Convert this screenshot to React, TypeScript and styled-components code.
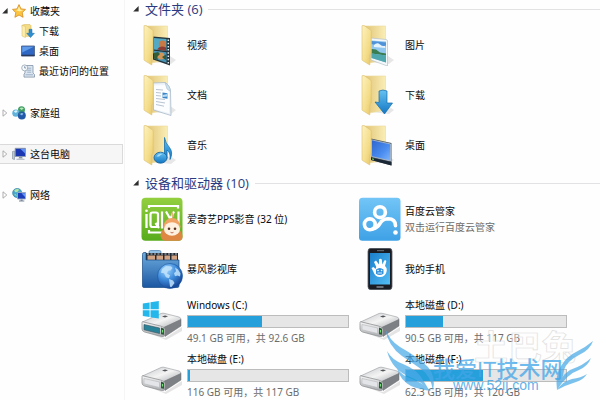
import React, { useState } from "react";
import styled, { createGlobalStyle } from "styled-components";

const GlobalStyle = createGlobalStyle`
  *, *::before, *::after { box-sizing: border-box; }
  body {
    margin: 0;
    background: #fefefe;
    color: #080808;
    font-family: "Noto Sans", "Noto Sans CJK SC", sans-serif;
    font-size: 10px;
    line-height: 16px;
  }
  ul { list-style: none; margin: 0; padding: 0; }
  svg { display: block; flex: none; }
`;

const Page = styled.div`
  position: relative;
  display: flex;
  min-height: 100vh;
  overflow: hidden;
`;

const Sidebar = styled.nav`
  flex: none;
  width: 125px;
  padding-top: 1px;
  border-right: 1px solid #f5f5f7;
`;

const NavGroup = styled.ul`
  margin-bottom: 21px;
  &:first-child { margin-bottom: 22px; }
`;

const NavLink = styled.a<{ $child?: boolean; $active?: boolean }>`
  display: flex;
  align-items: center;
  gap: 4px;
  height: 20px;
  padding-left: ${(p) => (p.$child ? 21 : 2)}px;
  margin-right: 1px;
  color: inherit;
  text-decoration: none;
  white-space: nowrap;
  border: 1px solid ${(p) => (p.$active ? "#dadada" : "transparent")};
  border-left: 0;
  background: ${(p) => (p.$active ? "#f6f6f6" : "transparent")};
`;

const Main = styled.main`
  flex: 1;
  min-width: 0;
`;

const Section = styled.section`
  margin-bottom: 4px;
`;

const SectionHeader = styled.h2`
  display: flex;
  align-items: center;
  gap: 6px;
  height: 18px;
  margin: 0 0 2px;
  padding-left: 8px;
  font-size: 13px;
  font-weight: 400;
  &::after {
    content: "";
    flex: 1;
    height: 1px;
    background: #e2e2e5;
  }
`;

const SectionToggle = styled.button`
  display: flex;
  align-items: center;
  gap: 6px;
  padding: 0;
  border: 0;
  background: none;
  font: inherit;
  font-family: "Open Sans", "Noto Sans CJK SC", sans-serif;
  line-height: 18px;
  color: #2b3a80;
`;

const Tiles = styled.ul<{ $drives?: boolean }>`
  display: grid;
  grid-template-columns: repeat(auto-fill, 218px);
  grid-auto-rows: 50px;
  row-gap: ${(p) => (p.$drives ? 4 : 0)}px;
  margin-top: ${(p) => (p.$drives ? 2 : 0)}px;
  padding-left: 16px;
`;

const Tile = styled.button`
  display: flex;
  align-items: center;
  gap: 4px;
  width: 100%;
  height: 50px;
  padding: 0;
  border: 0;
  background: none;
  color: inherit;
  font: inherit;
  text-align: left;
`;

const TileText = styled.span`
  display: flex;
  flex-direction: column;
  white-space: nowrap;
`;

const Muted = styled.span`
  color: #6c6c6c;
`;

const Capacity = styled.progress`
  appearance: none;
  display: block;
  width: 162px;
  height: 13px;
  margin: 2px 0;
  border: 1px solid #bcbcbc;
  background: #e6e6e6;
  &::-webkit-progress-bar { background: #e6e6e6; }
  &::-webkit-progress-value { background: #26a0da; }
`;

const Watermark = styled.div`
  position: absolute;
  left: 380px;
  top: 320px;
  width: 220px;
  height: 80px;
  pointer-events: none;
`;

/* ---------- small navigation icons ---------- */

const Arrow = ({ open }: { open?: boolean }) => (
  <svg width="6" height="8" viewBox="0 0 6 8" aria-hidden="true">
    {open ? <path d="M5.6 1v5.5H.2z" fill="#2e2e2e" /> : <path d="M1 .8 4.8 4 1 7.2z" fill="#fff" stroke="#a5a5a5" strokeWidth=".9" />}
  </svg>
);

const StarIcon = () => (
  <svg width="14" height="14" viewBox="0 0 14 14">
    <path d="M7 .6 9 4.9l4.5.5-3.3 3.2.9 4.7L7 11l-4.1 2.3.9-4.7L.5 5.4 5 4.9z" fill="#fbc441" stroke="#d58a1c" strokeWidth=".8" strokeLinejoin="round" />
    <path d="M7 2.6 8.4 5.7l3 .4-4 1.3-3.6-1.3 1.700-.4z" fill="#fff0a4" />
  </svg>
);

const SmallDownloadIcon = () => (
  <svg width="14" height="14" viewBox="0 0 14 14">
    <path d="M1 1.400 3 .6h6l1 1v10.700H3z" fill="#f4dc86" stroke="#d9b95a" strokeWidth=".6" />
    <path d="M1 1.200 4.400 2.600v11L1 12z" fill="#fbeeae" stroke="#d9b95a" strokeWidth=".5" />
    <path d="M8 5.300h3v4h2.400l-3.900 4.300L5.700 9.300H8z" fill="#2d8fd2" stroke="#1d6ca8" strokeWidth=".5" />
  </svg>
);

const SmallDesktopIcon = () => (
  <svg width="14" height="14" viewBox="0 0 14 14">
    <path d="M.5 2h13v10H.5z" fill="#2e67c4" stroke="#52688c" strokeWidth=".9" />
    <path d="M1.200 2.800h11.600L1.200 8.500z" fill="#5f9be9" />
    <path d="M.5 10.700h13v1.400H.5z" fill="#2a3b60" />
  </svg>
);

const RecentIcon = () => (
  <svg width="14" height="14" viewBox="0 0 14 14">
    <path d="M4 1.500h8v7.500l1.500 1.500v2.600H3V10l1-1z" fill="#dde6f0" stroke="#8292a6" strokeWidth=".8" />
    <path d="M6.200 4.200h4M6.200 6.200h4M6.200 8.200h4M4.500 10.800h7.500" stroke="#8ba2bd" strokeWidth=".8" />
    <circle cx="3.700" cy="3.900" r="3" fill="#f7fafc" stroke="#94a3b4" strokeWidth=".8" />
    <path d="M3.700 2.200V4h1.400" fill="none" stroke="#58718f" strokeWidth=".7" />
  </svg>
);

const HomegroupIcon = () => (
  <svg width="14" height="14" viewBox="0 0 14 14">
    <circle cx="9.500" cy="3.800" r="3.500" fill="#3f9c63" />
    <circle cx="3.900" cy="7.200" r="3.600" fill="#62b3dc" />
    <circle cx="9.800" cy="9.600" r="4" fill="#235aa8" />
    <path d="M7.500 2.200q2.500-1.700 4.300.4L9.500 4z" fill="#b5e7b4" />
    <path d="M1.800 5.800q2-2.400 4-.8L4 7z" fill="#d9f3fb" />
    <path d="M7.700 8q2-1.700 3.700-.4L10 9.500z" fill="#87b8ef" />
    <path d="m7 5.700 2 1.400-2.200 2z" fill="#2d8146" />
  </svg>
);

const ComputerIcon = () => (
  <svg width="14" height="14" viewBox="0 0 14 14">
    <path d="M.5 4.500 2.500 4v8.500l-2-.6z" fill="#c0cad6" stroke="#7f8c9b" strokeWidth=".6" />
    <path d="M3.200 1.300h10.300V9.500H3.200z" fill="#1a36b0" stroke="#8b9ab0" strokeWidth=".9" />
    <path d="M8.500 2h4.600v4.500z" fill="#5f91f2" />
    <path d="M7.300 9.800h2.800l.6 1.800H6.500z" fill="#8593a6" />
    <path d="M4.500 11.800h8v1h-8z" fill="#aab4c2" />
  </svg>
);

const NetworkIcon = () => (
  <svg width="14" height="14" viewBox="0 0 14 14">
    <circle cx="5.200" cy="5" r="4.600" fill="#4ba8cb" stroke="#247a9c" strokeWidth=".6" />
    <path d="M2.200 2.500q2.500-2.300 5-.8L5.300 4l-2 .3zM2 6l2 .4.800 2.200z" fill="#b4e5a2" />
    <path d="M5.500 4.500h8v6.500h-8z" fill="#1c3fb9" stroke="#9dabc0" strokeWidth=".9" />
    <path d="M9.500 5.200H13V9z" fill="#6998f4" />
    <path d="M8.600 11.400h2v1.200h1.700v.8H7v-.8h1.600z" fill="#7b899c" />
  </svg>
);

/* ---------- folder tiles ---------- */

const FolderDefs = () => (
  <defs>
    <linearGradient id="folderFront" x1="0" x2="1" y1="0" y2="1">
      <stop offset="0" stopColor="#fdf3bf" />
      <stop offset=".6" stopColor="#f4dd8b" />
      <stop offset="1" stopColor="#e6c566" />
    </linearGradient>
    <linearGradient id="folderBack" x1="0" x2="1">
      <stop offset="0" stopColor="#dfc071" />
      <stop offset="1" stopColor="#faeeb6" />
    </linearGradient>
    <linearGradient id="blueGloss" x1="0" x2="0" y1="0" y2="1">
      <stop offset="0" stopColor="#67c2f2" />
      <stop offset="1" stopColor="#1277c4" />
    </linearGradient>
    <linearGradient id="screen" x1="0" x2="1" y1="0" y2="1">
      <stop offset="0" stopColor="#2c63cd" />
      <stop offset=".6" stopColor="#4b8df0" />
      <stop offset="1" stopColor="#83b7fb" />
    </linearGradient>
  </defs>
);

const Folder = ({ children }: { children: React.ReactNode }) => (
  <svg width="42" height="42" viewBox="0 0 42 42">
    <FolderDefs />
    <path d="M12 38 30 40l5-4-6-4z" fill="#000" opacity=".09" />
    <path d="M4 2h22.500V36L10 39z" fill="url(#folderBack)" stroke="#eddb9a" strokeWidth=".6" />
    {children}
    <path d="M3 1.700 5 1.500l6.500 4.500q.7.600.7 1.500V29l-1.400 2v10L3.500 36.500q-.5-.4-.5-1z" fill="url(#folderFront)" stroke="#dcc071" strokeWidth=".6" />
  </svg>
);

const VideoArt = () => (
  <>
    <path d="M12 12.500 29 14v27.500L12 35.500z" fill="#25343a" />
    <path d="M13 14 25.500 15v12L13 25.400z" fill="#53a8c4" />
    <path d="M13 26.700 25.500 28.300v10.500L13 34.500z" fill="#4794b6" />
    <circle cx="21.500" cy="20" r="3.600" fill="#c77a45" />
    <path d="M16 25.500q3-5 9-2v3.500z" fill="#8d3d33" />
    <circle cx="20" cy="32" r="3.400" fill="#d49559" />
    <path d="m13 29 4-1 2 2-3 3 1 3-4-1.500zM21 33l4-2.500v5.800z" fill="#325d36" />
    <path d="M27.300 15.500v24.500" stroke="#e9eef0" strokeWidth="1.500" strokeDasharray="1.500 1.700" />
  </>
);

const PictureArt = () => (
  <>
    <path d="M12 14 27 15.500q1.500.2 1.500 1.500v25L12 36z" fill="#f5f8fa" stroke="#b5c1ca" strokeWidth=".7" />
    <path d="M12.500 16.500 27 17.600V38.500L12.500 34z" fill="#91c7ef" />
    <path d="M12.500 17 27 18.500v5L12.500 20z" fill="#4f92d8" />
    <path d="M15 21q3-3 6-.5t5.500 1v2.500l-11.500-1z" fill="#e5f3fc" />
    <path d="m12.500 25 4.500.5 4 3 6 1v2L12.500 29.500z" fill="#397d50" />
    <path d="m12.500 29.500 14.500 2v7L12.500 34z" fill="#4da7ac" />
  </>
);

const DocumentArt = () => (
  <>
    <path d="M12 9 24 8.500q5 3 5.500 9L30 41.500 12.500 36z" fill="#eef4f9" stroke="#a9bac9" strokeWidth=".8" />
    <path d="M13 11.500 24 11q4 4 4 8v20L13 35z" fill="#fbfdff" />
    <path d="M15 15.500 22 16M15 18.500 20 19M15 21.500 20 22M15 24.500l9 1M15 27.500l9 1.500M15 30.500l8 1.700" stroke="#a8b5c5" strokeWidth=".8" />
    <path d="m21.500 18.500 5 .7v5.500l-5-.8z" fill="#3c86c7" />
    <path d="m21.500 21 5-1v2.500l-5 .5z" fill="#b7dcf5" />
    <path d="M24 8.500q5 3 5.500 9l-3.500-2.500z" fill="#cfe2ee" stroke="#9eb5c6" strokeWidth=".5" />
  </>
);

const DownloadArt = () => (
  <path d="M20 17q4-2 8 0v12h5.500L25.500 40 16 28l4 .5z" fill="url(#blueGloss)" stroke="#156baa" strokeWidth=".7" />
);

const MusicArt = () => (
  <>
    <path d="M23.500 13.500q1 6 5 10 4 5 .5 12 1-6.500-3-9.500v8.500h-2.500z" fill="url(#blueGloss)" stroke="#1772b2" strokeWidth=".8" />
    <ellipse cx="19.500" cy="33.700" rx="6.500" ry="5.500" fill="url(#blueGloss)" stroke="#135e9a" strokeWidth=".8" />
    <path d="M15.500 32.500q2-3.600 6-2.500-2 .5-3.500 2.500z" fill="#a6dcfa" />
  </>
);

const DesktopArt = () => (
  <>
    <path d="M12 14.500 32.500 19v22.500L12 36z" fill="#4d5761" />
    <path d="M12.500 15.800 31.600 20v17L12.500 32.500z" fill="url(#screen)" stroke="#b9c3cb" strokeWidth=".8" />
    <path d="M12 33.500 32.500 38v3.500L12 36z" fill="#1a2735" />
    <path d="m13 34.300 2 .4v1.600l-2-.5z" fill="#68b454" />
  </>
);

/* ---------- device tiles ---------- */

const IqiyiIcon = () => (
  <svg width="42" height="44" viewBox="0 0 42 44">
    <defs>
      <linearGradient id="iq" x1="0" x2="0" y1="0" y2="1">
        <stop offset="0" stopColor="#93cf3f" />
        <stop offset="1" stopColor="#57ab1c" />
      </linearGradient>
    </defs>
    <rect x=".5" y=".8" width="41" height="43" rx="4" fill="url(#iq)" />
    <g fill="none" stroke="#fff" strokeWidth="2.200">
      <path d="M8 11V9h29v2.500M8 33v2.500h15" />
      <path d="M5.500 17v14" strokeWidth="2.300" />
      <rect x="9.500" y="15.500" width="7.500" height="14.500" rx="2" />
      <path d="m14.500 26 3.500 5M21 14.500v17M25 14.500l8 14M33 14.500l-7 14M37.500 14.500v12" />
    </g>
    <circle cx="5.500" cy="13.800" r="1.300" fill="#fff" />
    <path d="M19.500 39q0-6 5-8h12q5 4 5 9-.5 4-4 3.800H25q-4.500 0-5.500-4.800z" fill="#de8742" />
    <path d="M31 14.500q-1.500 4 .8 6.500 2.400-2.500-.8-6.500z" fill="#e8b083" />
    <circle cx="31" cy="29.500" r="8.500" fill="#f1a265" />
    <ellipse cx="31" cy="32" rx="8" ry="6.800" fill="#fff1df" />
    <circle cx="28" cy="31.800" r="1.300" fill="#563421" />
    <circle cx="34" cy="31.800" r="1.300" fill="#563421" />
    <path d="M29.500 35.300q1.500 1.300 3 0" fill="none" stroke="#b04c33" strokeWidth=".8" />
  </svg>
);

const BaofengIcon = () => (
  <svg width="42" height="42" viewBox="0 0 42 42">
    <defs>
      <linearGradient id="bf" x1="0" x2="0" y1="0" y2="1">
        <stop offset="0" stopColor="#6cacde" />
        <stop offset="1" stopColor="#1b57a2" />
      </linearGradient>
      <radialGradient id="globe" cx=".35" cy=".25" r=".8">
        <stop offset="0" stopColor="#a1d7ff" />
        <stop offset=".5" stopColor="#3f8cdc" />
        <stop offset="1" stopColor="#123f8e" />
      </radialGradient>
    </defs>
    <path d="M8 6V4q0-1.500 1.500-1.500h9Q20 2.500 20 4v2z" fill="#92c1e5" stroke="#4a7eae" strokeWidth=".7" />
    <path d="M5 5h32v9H5z" fill="#242a32" />
    <path d="M6.500 7.500H14v5H6.500zM15.500 7.500H22v5h-6.500zM23.500 7.500H29v5h-5.500zM30.500 7.500H36v5h-5.500z" fill="#d3a483" />
    <path d="M6 6h30" stroke="#edf0f2" strokeWidth=".8" strokeDasharray="2 1.500" />
    <path d="M1.500 6.500q0-2 1.500-2h2V12h33v26q0 1.500-2 1.500H3q-1.500 0-1.500-1.500z" fill="url(#bf)" stroke="#174a85" strokeWidth=".7" />
    <circle cx="29" cy="28" r="12.500" fill="url(#globe)" stroke="#1a539e" strokeWidth=".6" />
    <path d="m21 21 4-3 5 .2 1.500 1.800-2 2.500-2.500.3-1 2.700 3 1.700-1 3-3-1-2-4-3-.5zM34 19.500l3 2 2.500 4-.5 3-2.500-1-2.500.7-1-3 2-2zM28 31l4 1.500 1.500 2.500-3 4-1.500-.2-.5-4z" fill="#c2e3fb" opacity=".85" />
  </svg>
);

const BaiduIcon = () => (
  <svg width="42" height="44" viewBox="0 0 42 44">
    <defs>
      <linearGradient id="bd" x1="0" x2="0" y1="0" y2="1">
        <stop offset="0" stopColor="#72c5f6" />
        <stop offset="1" stopColor="#3ea1e6" />
      </linearGradient>
    </defs>
    <rect x="0" y=".8" width="41.500" height="43" rx="3.500" fill="url(#bd)" />
    <g fill="none" stroke="#fff" strokeWidth="3.600">
      <circle cx="21" cy="15.200" r="5.400" />
      <circle cx="10.800" cy="27.300" r="5.400" />
      <path d="M13.500 32q5-1.200 7.500-5.500 2.300-4.300 8-4.700 7.500 0 7.500 7" strokeLinecap="round" />
    </g>
    <circle cx="36.500" cy="35.500" r="2.300" fill="#fff" />
  </svg>
);

const PhoneIcon = () => (
  <svg width="42" height="42" viewBox="0 0 42 42">
    <defs>
      <linearGradient id="ph" x1="0" x2="1" y1="0" y2="1">
        <stop offset="0" stopColor="#1a80cc" />
        <stop offset="1" stopColor="#53bdf4" />
      </linearGradient>
    </defs>
    <rect x="9" y=".3" width="24" height="41.400" rx="3" fill="#191c22" stroke="#555c66" strokeWidth=".8" />
    <path d="M11 5h20v31.500H11z" fill="url(#ph)" />
    <path d="M18 2.700h7" stroke="#6d747d" />
    <path d="M17.500 39h7" stroke="#979da5" strokeWidth="1.300" />
    <path d="m15 14 2-1.500 3 4v-5q1.500-1.700 2.800 0l.5 5 2-4q2-.7 2 1L26 18q2.500 2 1.500 6-1.500 5-6.500 5-5 0-6.500-5l-2-4 2-1 2 2 .8-2z" fill="#fff" />
    <path d="M17 21.500q3.700-3 7.500 0v4.300q-3.700 2.500-7.500 0z" fill="#3293dc" />
    <circle cx="19" cy="22.500" r=".8" fill="#fff" />
    <circle cx="22.600" cy="22.500" r=".8" fill="#fff" />
    <path d="M18.500 25h4.500" stroke="#fff" strokeWidth=".8" />
  </svg>
);

const DriveIcon = ({ system }: { system?: boolean }) => (
  <svg width="42" height="44" viewBox="0 0 42 44">
    <defs>
      <linearGradient id="dTop" x1="0" x2="1" y1="0" y2="1">
        <stop offset="0" stopColor="#c3c5c8" />
        <stop offset=".5" stopColor="#f4f4f4" />
        <stop offset="1" stopColor="#a6a9ad" />
      </linearGradient>
      <linearGradient id="dFront" x1="0" x2="0" y1="0" y2="1">
        <stop offset="0" stopColor="#f7f7f7" />
        <stop offset="1" stopColor="#a8abae" />
      </linearGradient>
    </defs>
    <path d="M3 32 24 39l17-11v4L25 41z" fill="#000" opacity=".1" />
    <path d="M1.500 23 20 14.500q2-.7 4 0L38 18q2 .7 2 2.500L23 29z" fill="url(#dTop)" stroke="#96999d" strokeWidth=".6" />
    <path d="M22.500 28.500 40 20.500v6.500L24 37.500z" fill="#7d8084" stroke="#6a6d70" strokeWidth=".5" />
    <path d="M1.500 22.700 19.500 27q4.500 1 4.500 3.500v4.500q0 3-3.500 2.500L3.500 33Q1 32 1 30v-5.500q0-1.800.5-1.800z" fill="url(#dFront)" stroke="#85888b" strokeWidth=".7" />
    <path d="M3 25.500 18.500 29v5.500L3 30.800z" fill={system ? "#2a8299" : "#e4e5e8"} stroke={system ? "#38505c" : "#b6b8bb"} strokeWidth=".6" />
    <path d="m20 28.500 3 1.200v6l-3-.5z" fill="#285b35" />
    <path d="M21.500 31v2.500" stroke="#71e477" strokeWidth="1.200" />
    <path d="m21 17.500 3-1 3 .8-3 1.200z" fill="#505357" />
    {system && (
      <path d="m1.800 4.500 6.800-1v6.700H1.800zM9.500 3.300l8.300-1.300v8.200H9.500zM1.800 11.200h6.800V18l-6.800-1zM9.500 11.200h8.300v8.300L9.500 18.200z" fill="#23b7ec" />
    )}
  </svg>
);

/* ---------- data ---------- */

const favorites = [
  { label: "下载", icon: <SmallDownloadIcon /> },
  { label: "桌面", icon: <SmallDesktopIcon /> },
  { label: "最近访问的位置", icon: <RecentIcon /> },
];

const places = [
  { label: "家庭组", icon: <HomegroupIcon />, active: false },
  { label: "这台电脑", icon: <ComputerIcon />, active: true },
  { label: "网络", icon: <NetworkIcon />, active: false },
];

const folders = [
  { label: "视频", art: <VideoArt /> },
  { label: "图片", art: <PictureArt /> },
  { label: "文档", art: <DocumentArt /> },
  { label: "下载", art: <DownloadArt /> },
  { label: "音乐", art: <MusicArt /> },
  { label: "桌面", art: <DesktopArt /> },
];

const devices = [
  { label: "爱奇艺PPS影音 (32 位)", icon: <IqiyiIcon /> },
  { label: "百度云管家", note: "双击运行百度云管家", icon: <BaiduIcon /> },
  { label: "暴风影视库", icon: <BaofengIcon /> },
  { label: "我的手机", icon: <PhoneIcon /> },
];

const drives = [
  { label: "Windows (C:)", free: "49.1", total: "92.6", used: 46, system: true },
  { label: "本地磁盘 (D:)", free: "90.5", total: "117", used: 23 },
  { label: "本地磁盘 (E:)", free: "116", total: "117", used: 1 },
  { label: "本地磁盘 (F:)", free: "62.3", total: "120", used: 48 },
];

const Group = ({ title, children }: { title: string; children: React.ReactNode }) => {
  const [open, setOpen] = useState(true);
  return (
    <Section>
      <SectionHeader>
        <SectionToggle type="button" aria-expanded={open} onClick={() => setOpen(!open)}>
          <Arrow open={open} />
          {title}
        </SectionToggle>
      </SectionHeader>
      {open && children}
    </Section>
  );
};

export default function App() {
  return (
    <>
      <GlobalStyle />
      <Page>
        <Sidebar>
          <NavGroup>
            <li><NavLink href="#favorites"><Arrow open /><StarIcon />收藏夹</NavLink></li>
            {favorites.map((f) => (
              <li key={f.label}><NavLink href="#favorites" $child>{f.icon}{f.label}</NavLink></li>
            ))}
          </NavGroup>
          {places.map((p) => (
            <NavGroup key={p.label}>
              <li><NavLink href="#places" $active={p.active}><Arrow />{p.icon}{p.label}</NavLink></li>
            </NavGroup>
          ))}
        </Sidebar>
        <Main>
          <Group title="文件夹 (6)">
            <Tiles>
              {folders.map((f) => (
                <li key={f.label}>
                  <Tile type="button"><Folder>{f.art}</Folder><TileText>{f.label}</TileText></Tile>
                </li>
              ))}
            </Tiles>
          </Group>
          <Group title="设备和驱动器 (10)">
            <Tiles>
              {devices.map((d) => (
                <li key={d.label}>
                  <Tile type="button">
                    {d.icon}
                    <TileText>{d.label}{d.note && <Muted>{d.note}</Muted>}</TileText>
                  </Tile>
                </li>
              ))}
            </Tiles>
            <Tiles $drives>
              {drives.map((d) => (
                <li key={d.label}>
                  <Tile type="button">
                    <DriveIcon system={d.system} />
                    <TileText>
                      {d.label}
                      <Capacity max={100} value={d.used} aria-label={d.label} />
                      <Muted>{d.free} GB 可用，共 {d.total} GB</Muted>
                    </TileText>
                  </Tile>
                </li>
              ))}
            </Tiles>
          </Group>
        </Main>
        <Watermark aria-hidden="true">
          <svg width="220" height="80" viewBox="0 0 220 80" fontFamily='"Liberation Sans", "Noto Sans CJK SC", sans-serif'>
            <text x="94" y="40" fontSize="34" fontWeight="700" fill="#fff" fillOpacity=".4" stroke="#e0e0e0" strokeWidth=".7">土巴兔</text>
            <g fill="#4aaae8" opacity=".72">
              <path d="M5 8q4 12 15 19 18 10 28 20 8 9 5 24-2-15-12-22-10-7-19-13Q8 26 5 8z" />
              <path d="M7 31q5 9 16 13 15 6 20 16 4 6 6 11-8-10-19-14Q12 50 7 31z" />
              <path d="M17 48q5 8 15 11 11 4 19 12-13-2-20-5-11-6-14-18z" />
              <path d="M213 21q-3 9-14 14-12 6-15 15-1 10-7 20-2-15 4-24 6-10 15-14 10-5 17-11z" />
              <path d="M211 38q-3 8-12 12-12 4-22 20 3-14 13-20 14-5 21-12z" />
              <path d="M207 54q-4 6-11 8-10 3-19 8 6-9 15-11 9-1 15-5z" />
            </g>
            <text x="53" y="57" fontSize="22" fontWeight="500" fill="#41a5e8" fillOpacity=".75">我爱IT技术网</text>
            <text x="73" y="70" fontSize="14" fill="#41a5e8" fillOpacity=".85">www.52ij.com</text>
          </svg>
        </Watermark>
      </Page>
    </>
  );
}
